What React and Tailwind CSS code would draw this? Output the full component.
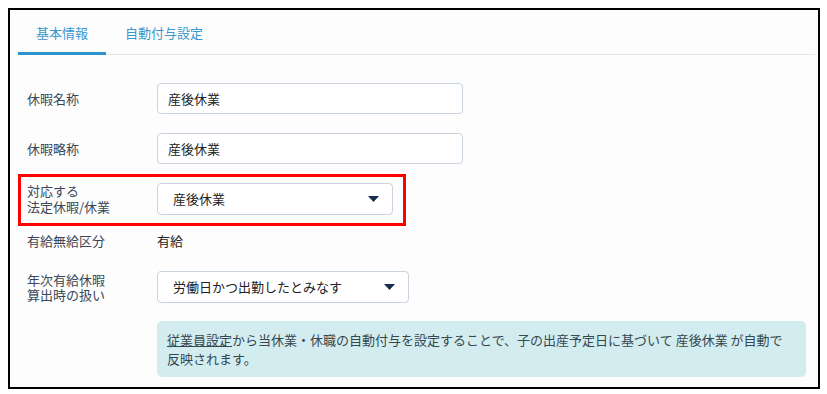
import React from "react";

const font = { fontFamily: '"Noto Sans CJK JP", "Noto Sans", sans-serif' };

function Caret() {
  return (
    <svg width="11" height="6" viewBox="0 0 11 6" className="shrink-0">
      <path d="M0 0h11L5.5 6z" fill="#1b2d4f" />
    </svg>
  );
}

function Select({ value, width }) {
  return (
    <div
      className={`${width} h-[32px] flex items-center justify-between pl-[15px] pr-[13px] border border-[#c8d3de] rounded-[4px] bg-white text-[13px] text-[#222]`}
    >
      <span>{value}</span>
      <Caret />
    </div>
  );
}

export default function App() {
  return (
    <div className="w-[827px] h-[394px] bg-white pt-[8px] pl-[8px]" style={font}>
      <div className="w-[812px] h-[381px] border-2 border-black bg-[#fdfdfd] flex flex-col">
        {/* tabs */}
        <div className="flex ml-[8px] mr-[3px] h-[45px] border-b border-[#e4e6e8]">
          <div className="px-[18px] flex items-center text-[13px] text-[#3a97cf] border-b-[3px] border-[#2b93cc] -mb-px pt-[3px]">
            基本情報
          </div>
          <div className="px-[19px] flex items-center text-[13px] text-[#3a97cf] pt-[2px]">
            自動付与設定
          </div>
        </div>

        <div className="flex flex-col pl-[8px] text-[13px] text-[#3b4656]">
          <div className="flex items-center mt-[28px] pl-[9px]">
            <div className="w-[130px]">休暇名称</div>
            <div className="w-[306px] h-[31px] flex items-center px-[10px] border border-[#c8d3de] rounded-[4px] bg-white text-[#222]">
              産後休業
            </div>
          </div>

          <div className="flex items-center mt-[19px] pl-[9px]">
            <div className="w-[130px]">休暇略称</div>
            <div className="w-[306px] h-[31px] flex items-center px-[10px] border border-[#c8d3de] rounded-[4px] bg-white text-[#222]">
              産後休業
            </div>
          </div>

          <div className="flex items-center mt-[10px] w-[388px] border-[3px] border-[#ff0000] pl-[6px] pt-[6px] pb-[8px]">
            <div className="w-[130px] leading-[16px]">
              対応する
              <br />
              法定休暇/休業
            </div>
            <Select value="産後休業" width="w-[236px]" />
          </div>

          <div className="flex items-center mt-[5px] pl-[9px] h-[20px]">
            <div className="w-[130px]">有給無給区分</div>
            <div className="text-[#222]">有給</div>
          </div>

          <div className="flex items-center mt-[20px] pl-[9px]">
            <div className="w-[130px] leading-[15px]">
              年次有給休暇
              <br />
              算出時の扱い
            </div>
            <Select value="労働日かつ出勤したとみなす" width="w-[252px]" />
          </div>

          <div className="mt-[18px] ml-[139px] w-[649px] rounded-[5px] bg-[#d3ecf0] px-[10px] py-[9px] leading-[19px] text-[#35474f]">
            <span className="underline">従業員設定</span>
            から当休業・休職の自動付与を設定することで、子の出産予定日に基づいて 産後休業 が自動で
            <br />
            反映されます。
          </div>
        </div>
      </div>
    </div>
  );
}
